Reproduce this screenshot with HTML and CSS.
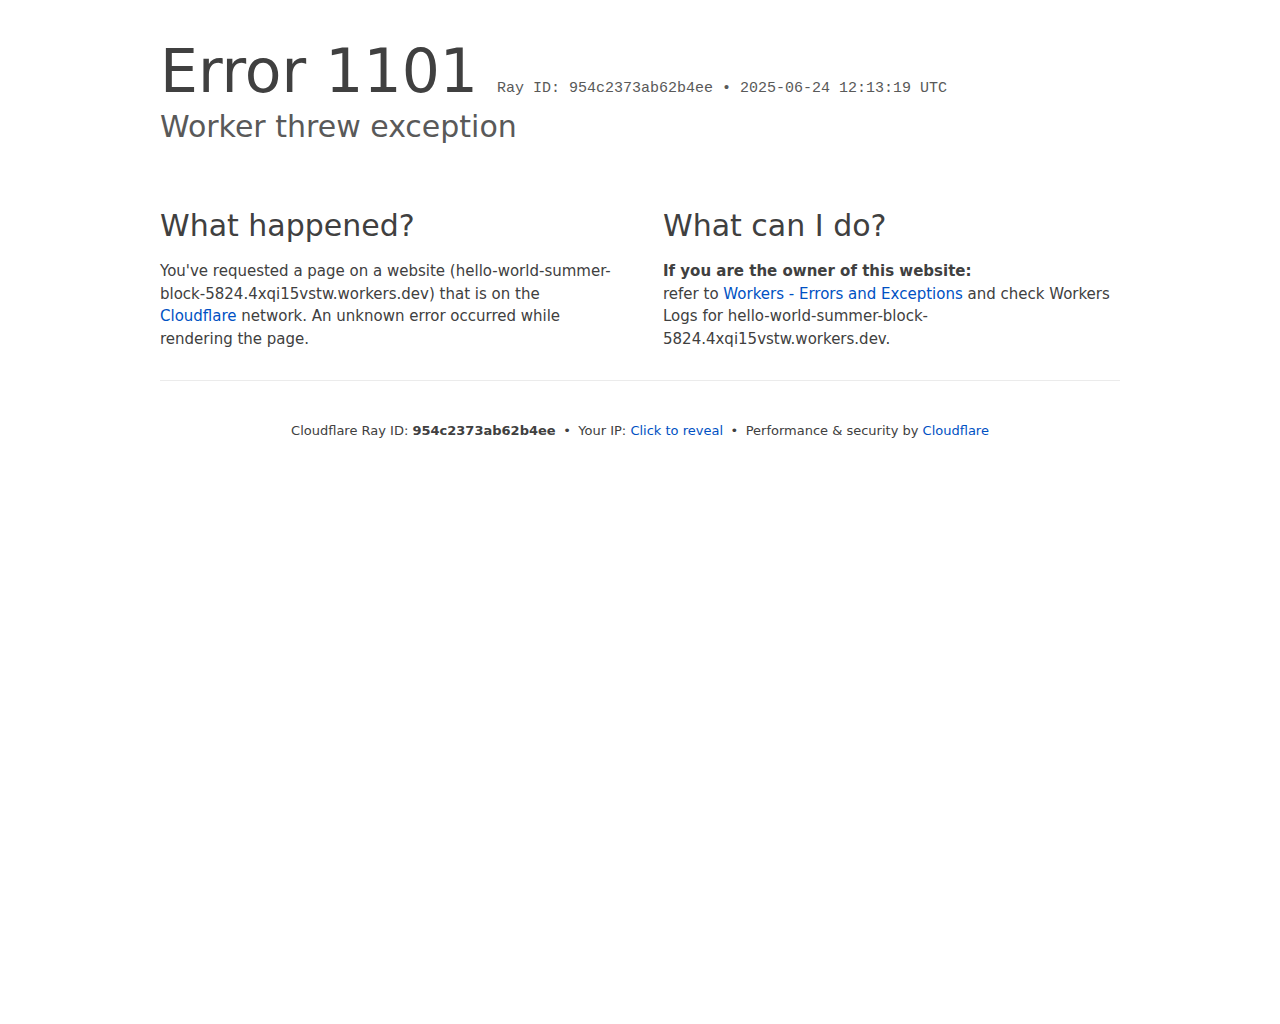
FILE: index.html
```html
<!DOCTYPE html>
<html lang="en">
<head>
<meta charset="utf-8">
<title>Worker threw exception | Cloudflare</title>
<link rel="stylesheet" href="styles.css">
</head>
<body>
<div class="wrapper">
  <header class="header">
    <div class="title-row">
      <h1 class="error-title">Error 1101</h1>
      <span class="error-type">Ray ID: 954c2373ab62b4ee &bull; 2025-06-24 12:13:19 UTC</span>
    </div>
    <h2 class="subheadline">Worker threw exception</h2>
  </header>

  <section class="columns">
    <div class="column">
      <h2 class="col-title">What happened?</h2>
      <p class="text">You've requested a page on a website (hello-world-summer-block-5824.4xqi15vstw.workers.dev) that is on the <a href="#" class="link">Cloudflare</a> network. An unknown error occurred while rendering the page.</p>
    </div>
    <div class="column">
      <h2 class="col-title">What can I do?</h2>
      <p class="text"><strong>If you are the owner of this website:</strong><br>refer to <a href="#" class="link">Workers - Errors and Exceptions</a> and check Workers Logs for hello-world-summer-block-5824.4xqi15vstw.workers.dev.</p>
    </div>
  </section>

  <footer class="footer">
    <span>Cloudflare Ray ID: <strong>954c2373ab62b4ee</strong></span>
    <span class="sep">&bull;</span>
    <span>Your IP: <a href="#" class="link">Click to reveal</a></span>
    <span class="sep">&bull;</span>
    <span>Performance &amp; security by <a href="#" class="link">Cloudflare</a></span>
  </footer>
</div>
</body>
</html>
```
FILE: styles.css
```css
html, body {
  margin: 0;
  padding: 0;
  background: #ffffff;
}

body {
  font-family: "DejaVu Sans", "Noto Sans", sans-serif;
  color: #404040;
}

.wrapper {
  width: 960px;
  margin: 0 auto;
}

.header {
  padding-top: 35px;
}

.title-row {
  display: flex;
  align-items: baseline;
  gap: 19px;
}

.error-title {
  margin: 0;
  font-size: 60px;
  line-height: 1.2;
  font-weight: 400;
  color: #404040;
}

.error-type {
  font-family: "Liberation Mono", "Courier New", monospace;
  font-size: 15px;
  color: #595959;
}

.subheadline {
  margin: 2px 0 0;
  font-size: 30px;
  line-height: 1.2;
  font-weight: 400;
  color: #595959;
}

.columns {
  display: grid;
  grid-template-columns: 1fr 1fr;
  column-gap: 46px;
  margin-top: 63px;
  padding-bottom: 30px;
  border-bottom: 1px solid #ebebeb;
}

.col-title {
  margin: 0;
  font-size: 30px;
  line-height: 1.2;
  font-weight: 400;
  color: #404040;
}

.text {
  margin: 16px 0 0;
  font-size: 15px;
  line-height: 1.5;
  color: #404040;
}

.text strong {
  font-weight: 700;
}

.link {
  color: #0051c3;
  text-decoration: none;
}

.footer {
  display: flex;
  justify-content: center;
  align-items: baseline;
  gap: 7.5px;
  padding-top: 40px;
  font-size: 13px;
  line-height: 1.5;
  color: #404040;
}

.footer strong {
  font-weight: 700;
}
```
